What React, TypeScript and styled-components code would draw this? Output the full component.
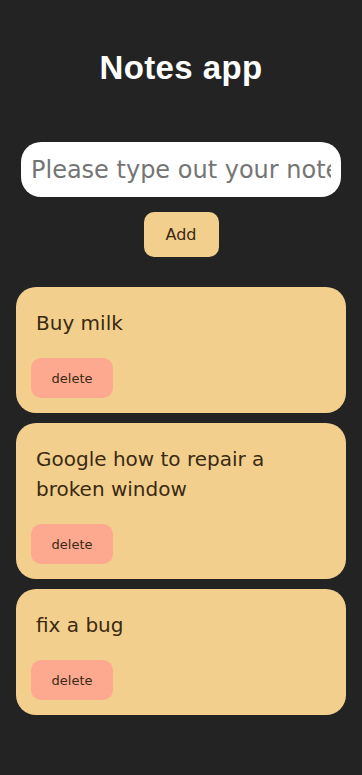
import styled, { createGlobalStyle } from 'styled-components';

const GlobalStyle = createGlobalStyle`
  * {
    box-sizing: border-box;
  }
  html, body {
    margin: 0;
    padding: 0;
    background: #232323;
    font-family: 'DejaVu Sans', 'Noto Sans', sans-serif;
  }
`;

const AppWrapper = styled.div`
  display: flex;
  flex-direction: column;
  align-items: center;
  min-height: 775px;
  padding: 0 16px 40px;
`;

const Title = styled.h1`
  margin: 48px 0 54px;
  font-family: 'Liberation Sans', Arial, sans-serif;
  font-size: 33px;
  line-height: 40px;
  font-weight: 700;
  letter-spacing: 0.4px;
  color: #ffffff;
`;

const NoteInput = styled.input`
  width: 320px;
  height: 55px;
  border: none;
  border-radius: 20px;
  padding: 0 10px;
  background: #ffffff;
  font-family: inherit;
  font-size: 24px;
  color: #222;
  &::placeholder {
    color: #757575;
  }
  &:focus {
    outline: none;
  }
`;

const Button = styled.button<{ $variant?: 'add' | 'delete' }>`
  border: none;
  font-family: inherit;
  cursor: pointer;
  color: #3a2a12;
  width: ${(p) => (p.$variant === 'delete' ? '82px' : '75px')};
  height: ${(p) => (p.$variant === 'delete' ? '40px' : '45px')};
  border-radius: 10px;
  background: ${(p) => (p.$variant === 'delete' ? '#fda990' : '#f3cf8e')};
  font-size: ${(p) => (p.$variant === 'delete' ? '13px' : '16px')};
`;

const AddRow = styled.div`
  margin: 15px 0 30px;
`;

const NoteList = styled.div`
  width: 330px;
  display: flex;
  flex-direction: column;
  gap: 10px;
`;

const NoteCard = styled.div`
  display: flex;
  flex-direction: column;
  align-items: flex-start;
  background: #f3cf8e;
  border-radius: 20px;
  padding: 15px;
`;

const NoteText = styled.p`
  margin: 6px 10px 20px 5px;
  font-size: 20px;
  line-height: 30px;
  color: #3a2a12;
`;

const notes = ['Buy milk', 'Google how to repair a broken window', 'fix a bug'];

export default function App() {
  return (
    <>
      <GlobalStyle />
      <AppWrapper>
        <Title>Notes app</Title>
        <NoteInput type='text' placeholder='Please type out your note' />
        <AddRow>
          <Button $variant='add'>Add</Button>
        </AddRow>
        <NoteList>
          {notes.map((note) => (
            <NoteCard key={note}>
              <NoteText>{note}</NoteText>
              <Button $variant='delete'>delete</Button>
            </NoteCard>
          ))}
        </NoteList>
      </AppWrapper>
    </>
  );
}
